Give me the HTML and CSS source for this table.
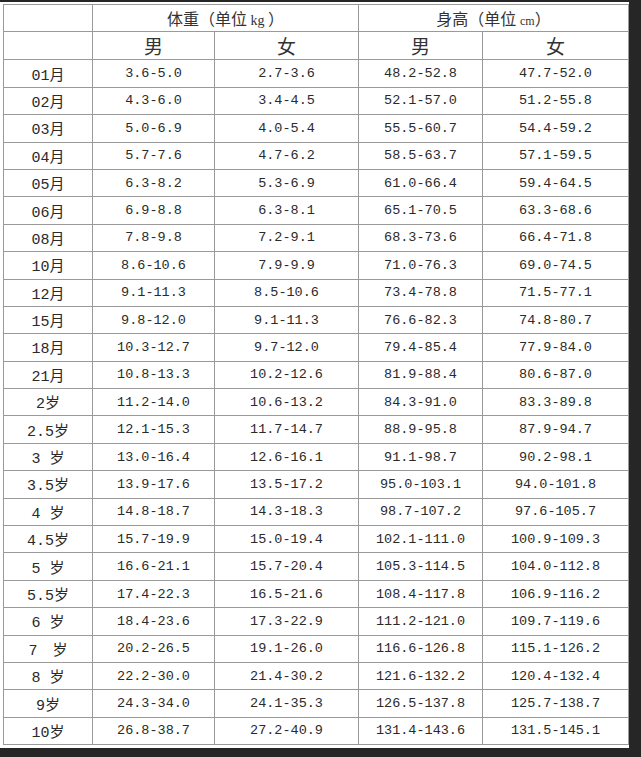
FILE: index.html
```html
<!DOCTYPE html>
<html lang="zh">
<head>
<meta charset="utf-8">
<link rel="stylesheet" href="styles.css">
</head>
<body>
<div class="sheet">
<table class="chart">
<colgroup>
<col class="c-age"><col class="c-w1"><col class="c-w2"><col class="c-h1"><col class="c-h2">
</colgroup>
<thead>
<tr><th class="blank"></th><th colspan="2" class="group">体重（单位 <span class="unit">kg</span> ）</th><th colspan="2" class="group">身高（单位 <span class="unit small">cm</span>）</th></tr>
<tr><th class="blank"></th><th class="sex">男</th><th class="sex">女</th><th class="sex">男</th><th class="sex">女</th></tr>
</thead>
<tbody>
<tr><td class="age">01月</td><td>3.6-5.0</td><td>2.7-3.6</td><td>48.2-52.8</td><td>47.7-52.0</td></tr>
<tr><td class="age">02月</td><td>4.3-6.0</td><td>3.4-4.5</td><td>52.1-57.0</td><td>51.2-55.8</td></tr>
<tr><td class="age">03月</td><td>5.0-6.9</td><td>4.0-5.4</td><td>55.5-60.7</td><td>54.4-59.2</td></tr>
<tr><td class="age">04月</td><td>5.7-7.6</td><td>4.7-6.2</td><td>58.5-63.7</td><td>57.1-59.5</td></tr>
<tr><td class="age">05月</td><td>6.3-8.2</td><td>5.3-6.9</td><td>61.0-66.4</td><td>59.4-64.5</td></tr>
<tr><td class="age">06月</td><td>6.9-8.8</td><td>6.3-8.1</td><td>65.1-70.5</td><td>63.3-68.6</td></tr>
<tr><td class="age">08月</td><td>7.8-9.8</td><td>7.2-9.1</td><td>68.3-73.6</td><td>66.4-71.8</td></tr>
<tr><td class="age">10月</td><td>8.6-10.6</td><td>7.9-9.9</td><td>71.0-76.3</td><td>69.0-74.5</td></tr>
<tr><td class="age">12月</td><td>9.1-11.3</td><td>8.5-10.6</td><td>73.4-78.8</td><td>71.5-77.1</td></tr>
<tr><td class="age">15月</td><td>9.8-12.0</td><td>9.1-11.3</td><td>76.6-82.3</td><td>74.8-80.7</td></tr>
<tr><td class="age">18月</td><td>10.3-12.7</td><td>9.7-12.0</td><td>79.4-85.4</td><td>77.9-84.0</td></tr>
<tr><td class="age">21月</td><td>10.8-13.3</td><td>10.2-12.6</td><td>81.9-88.4</td><td>80.6-87.0</td></tr>
<tr><td class="age">2岁</td><td>11.2-14.0</td><td>10.6-13.2</td><td>84.3-91.0</td><td>83.3-89.8</td></tr>
<tr><td class="age">2.5岁</td><td>12.1-15.3</td><td>11.7-14.7</td><td>88.9-95.8</td><td>87.9-94.7</td></tr>
<tr><td class="age">3 岁</td><td>13.0-16.4</td><td>12.6-16.1</td><td>91.1-98.7</td><td>90.2-98.1</td></tr>
<tr><td class="age">3.5岁</td><td>13.9-17.6</td><td>13.5-17.2</td><td>95.0-103.1</td><td>94.0-101.8</td></tr>
<tr><td class="age">4 岁</td><td>14.8-18.7</td><td>14.3-18.3</td><td>98.7-107.2</td><td>97.6-105.7</td></tr>
<tr><td class="age">4.5岁</td><td>15.7-19.9</td><td>15.0-19.4</td><td>102.1-111.0</td><td>100.9-109.3</td></tr>
<tr><td class="age">5 岁</td><td>16.6-21.1</td><td>15.7-20.4</td><td>105.3-114.5</td><td>104.0-112.8</td></tr>
<tr><td class="age">5.5岁</td><td>17.4-22.3</td><td>16.5-21.6</td><td>108.4-117.8</td><td>106.9-116.2</td></tr>
<tr><td class="age">6 岁</td><td>18.4-23.6</td><td>17.3-22.9</td><td>111.2-121.0</td><td>109.7-119.6</td></tr>
<tr><td class="age">7&emsp;岁</td><td>20.2-26.5</td><td>19.1-26.0</td><td>116.6-126.8</td><td>115.1-126.2</td></tr>
<tr><td class="age">8 岁</td><td>22.2-30.0</td><td>21.4-30.2</td><td>121.6-132.2</td><td>120.4-132.4</td></tr>
<tr><td class="age">9岁</td><td>24.3-34.0</td><td>24.1-35.3</td><td>126.5-137.8</td><td>125.7-138.7</td></tr>
<tr><td class="age">10岁</td><td>26.8-38.7</td><td>27.2-40.9</td><td>131.4-143.6</td><td>131.5-145.1</td></tr>
</tbody>
</table>
</div>
</body>
</html>
```
FILE: styles.css
```css
html, body {
  margin: 0;
  padding: 0;
  background: #262626;
}
body {
  width: 641px;
  height: 757px;
  overflow: hidden;
}
.sheet {
  margin-top: 2px;
  width: 626px;
  height: 744px;
  padding: 2px 0 0 3px;
  background: #fff;
  box-sizing: content-box;
}
.chart {
  border-collapse: collapse;
  table-layout: fixed;
  width: 625px;
  color: #2a2a2a;
}
.c-age { width: 89px; }
.c-w1 { width: 122px; }
.c-w2 { width: 144px; }
.c-h1 { width: 124px; }
.c-h2 { width: 146px; }
.chart th, .chart td {
  border: 1px solid #9a9a9a;
  height: 26.4px;
  padding: 0;
  text-align: center;
  vertical-align: middle;
  font-weight: normal;
}
.chart td {
  font-family: "Liberation Mono", "DejaVu Sans Mono", monospace;
  font-size: 13.5px;
  letter-spacing: 0;
}
.chart th {
  font-family: "Noto Sans CJK SC", sans-serif;
  color: #333;
}
.group {
  font-size: 16px;
}
.unit {
  font-family: "Liberation Serif", serif;
  font-size: 14px;
}
.unit.small {
  font-size: 12px;
}
.sex {
  font-size: 19px;
}
.chart td.age {
  font-family: "Liberation Mono", "Noto Sans CJK SC", monospace;
  font-size: 15px;
}
```
